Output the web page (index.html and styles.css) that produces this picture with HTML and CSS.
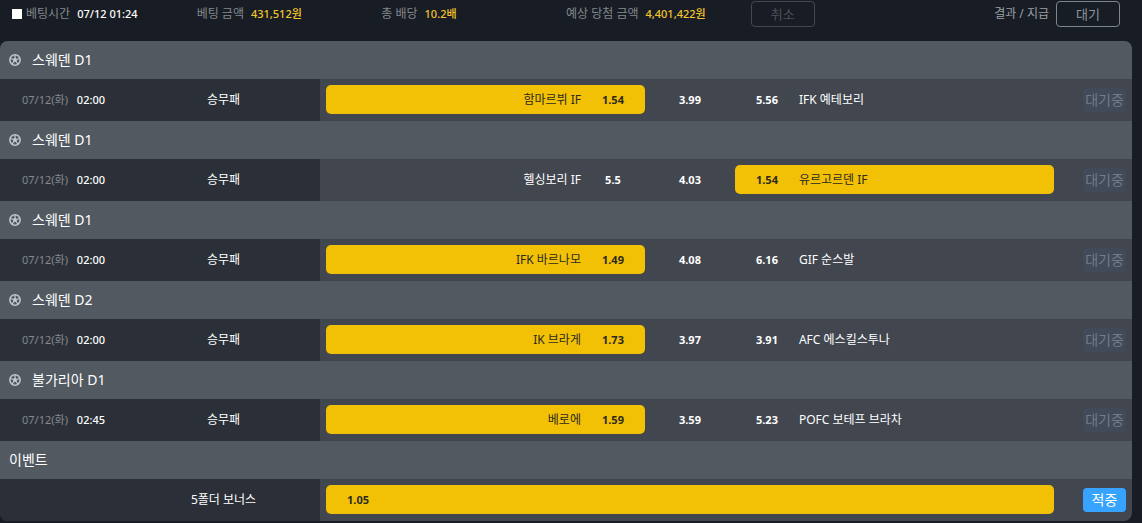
FILE: index.html
```
<!DOCTYPE html>
<html lang="ko">
<head>
  <meta charset="UTF-8">
  <meta name="viewport" content="width=device-width, initial-scale=1.0">
  <title>베팅 내역</title>
  <link rel="stylesheet" href="styles.css">
</head>
<body>
  <svg width="0" height="0" class="sprite" aria-hidden="true">
    <symbol id="ball" viewBox="0 0 24 24">
      <circle cx="12" cy="12" r="10.4" fill="none" stroke="currentColor" stroke-width="3"/>
      <path d="M12 7.6l4.3 3.1-1.6 5H9.3l-1.6-5z" fill="currentColor"/>
      <path d="M12 12V2M12 12l9.5-3.1M12 12l5.9 8.1M12 12l-5.9 8.1M12 12L2.5 8.9" stroke="currentColor" stroke-width="2.4"/>
    </symbol>
  </svg>

  <div class="summary">
    <div class="item">
      <input type="checkbox" id="bet" class="check">
      <label for="bet">베팅시간</label>
      <span class="value">07/12 01:24</span>
    </div>
    <div class="item">베팅 금액 <span class="value gold">431,512원</span></div>
    <div class="item">총 배당 <span class="value gold">10.2배</span></div>
    <div class="item">예상 당첨 금액 <span class="value gold">4,401,422원</span></div>
    <div class="item"><button type="button" class="btn cancel">취소</button></div>
    <div class="item result">결과 / 지급 <button type="button" class="btn">대기</button></div>
  </div>

  <div class="board">
    <table class="bets">
      <colgroup>
        <col class="col-time">
        <col class="col-type">
        <col>
        <col class="col-draw">
        <col>
        <col class="col-status">
      </colgroup>
      <tbody>
        <tr class="league">
          <th colspan="6"><svg class="ball"><use href="#ball"/></svg>스웨덴 D1</th>
        </tr>
        <tr class="match">
          <td class="time">07/12(화) <b>02:00</b></td>
          <td class="type">승무패</td>
          <td><div class="pick home on"><span>함마르뷔 IF</span><span class="odd">1.54</span></div></td>
          <td class="odd">3.99</td>
          <td><div class="pick"><span class="odd">5.56</span><span>IFK 예테보리</span></div></td>
          <td class="status"><span class="badge">대기중</span></td>
        </tr>
        <tr class="league">
          <th colspan="6"><svg class="ball"><use href="#ball"/></svg>스웨덴 D1</th>
        </tr>
        <tr class="match">
          <td class="time">07/12(화) <b>02:00</b></td>
          <td class="type">승무패</td>
          <td><div class="pick home"><span>헬싱보리 IF</span><span class="odd">5.5</span></div></td>
          <td class="odd">4.03</td>
          <td><div class="pick on"><span class="odd">1.54</span><span>유르고르덴 IF</span></div></td>
          <td class="status"><span class="badge">대기중</span></td>
        </tr>
        <tr class="league">
          <th colspan="6"><svg class="ball"><use href="#ball"/></svg>스웨덴 D1</th>
        </tr>
        <tr class="match">
          <td class="time">07/12(화) <b>02:00</b></td>
          <td class="type">승무패</td>
          <td><div class="pick home on"><span>IFK 바르나모</span><span class="odd">1.49</span></div></td>
          <td class="odd">4.08</td>
          <td><div class="pick"><span class="odd">6.16</span><span>GIF 순스발</span></div></td>
          <td class="status"><span class="badge">대기중</span></td>
        </tr>
        <tr class="league">
          <th colspan="6"><svg class="ball"><use href="#ball"/></svg>스웨덴 D2</th>
        </tr>
        <tr class="match">
          <td class="time">07/12(화) <b>02:00</b></td>
          <td class="type">승무패</td>
          <td><div class="pick home on"><span>IK 브라게</span><span class="odd">1.73</span></div></td>
          <td class="odd">3.97</td>
          <td><div class="pick"><span class="odd">3.91</span><span>AFC 에스킬스투나</span></div></td>
          <td class="status"><span class="badge">대기중</span></td>
        </tr>
        <tr class="league">
          <th colspan="6"><svg class="ball"><use href="#ball"/></svg>불가리아 D1</th>
        </tr>
        <tr class="match">
          <td class="time">07/12(화) <b>02:45</b></td>
          <td class="type">승무패</td>
          <td><div class="pick home on"><span>베로에</span><span class="odd">1.59</span></div></td>
          <td class="odd">3.59</td>
          <td><div class="pick"><span class="odd">5.23</span><span>POFC 보테프 브라차</span></div></td>
          <td class="status"><span class="badge">대기중</span></td>
        </tr>
        <tr class="league">
          <th colspan="6">이벤트</th>
        </tr>
        <tr class="match">
          <td class="time"></td>
          <td class="type">5폴더 보너스</td>
          <td colspan="3"><div class="pick on"><span class="odd">1.05</span></div></td>
          <td class="status"><span class="badge win">적중</span></td>
        </tr>
      </tbody>
    </table>
  </div>
</body>
</html>
```
FILE: styles.css
```
* {
  box-sizing: border-box;
}

body {
  margin: 0;
  background: #181d25;
  color: #fff;
  font-family: "Noto Sans", "Noto Sans CJK KR", sans-serif;
  font-size: 12px;
  line-height: 18px;
}

.sprite {
  position: absolute;
}

/* top summary line */
.summary {
  display: grid;
  grid-template-columns: repeat(6, 1fr);
  padding: 1px 22px 14px 12px;
  color: #84878b;
}

.item {
  display: flex;
  align-items: center;
  gap: 7px;
  height: 26px;
  white-space: nowrap;
}

.result {
  justify-content: flex-end;
  color: #9b9ea2;
}

.check {
  appearance: none;
  width: 10px;
  height: 10px;
  margin: 0 -3px 0 0;
  background: #fff;
}

.value {
  color: #fff;
  font-size: 11px;
  font-weight: 500;
}

.gold {
  color: #f3c42c;
}

.btn {
  width: 64px;
  height: 26px;
  padding: 0 0 2px;
  border: 1px solid #7f858c;
  border-radius: 4px;
  background: transparent;
  color: #8d969e;
  font-family: inherit;
  font-size: 13px;
}

.cancel {
  border-color: #43484f;
  color: #4b5056;
}

/* bet list */
.board {
  margin-right: 10px;
  border-radius: 8px;
  overflow: hidden;
}

.bets {
  width: 100%;
  table-layout: fixed;
  border-collapse: collapse;
  background: #41464f;
}

.bets th,
.bets td {
  padding: 0;
  white-space: nowrap;
}

.col-time {
  width: 127px;
}

.col-type {
  width: 193px;
}

.col-draw {
  width: 78px;
}

.col-status {
  width: 72px;
}

.bets .league th {
  height: 38px;
  padding: 0 9px;
  background: #525961;
  font-size: 14px;
  font-weight: 400;
  text-align: left;
}

.ball {
  width: 12px;
  height: 12px;
  margin-right: 11px;
  color: #c3c8cd;
  vertical-align: -1px;
}

.bets .match td {
  height: 42px;
  padding: 0 6px 1px;
}

.match .time,
.match .type {
  background: #2b3038;
}

.bets .match .time {
  padding-left: 22px;
  color: #85888c;
  font-size: 11px;
}

.time b {
  margin-left: 6px;
  color: #fff;
  font-weight: 500;
}

.type,
.match .odd {
  text-align: center;
}

.odd {
  font-size: 11px;
  font-weight: 700;
}

.pick {
  display: flex;
  align-items: center;
  height: 29px;
  border-radius: 5px;
}

.pick .odd {
  width: 64px;
}

.home {
  justify-content: flex-end;
}

.on {
  background: #f2c005;
  color: #2b2a20;
}

.match .status {
  text-align: right;
}

.badge {
  display: inline-block;
  width: 43px;
  height: 24px;
  border-radius: 4px;
  background: #414a59;
  color: #737b87;
  font-size: 14px;
  line-height: 24px;
  text-align: center;
}

.win {
  background: #36a3ff;
  color: #fff;
}
```
